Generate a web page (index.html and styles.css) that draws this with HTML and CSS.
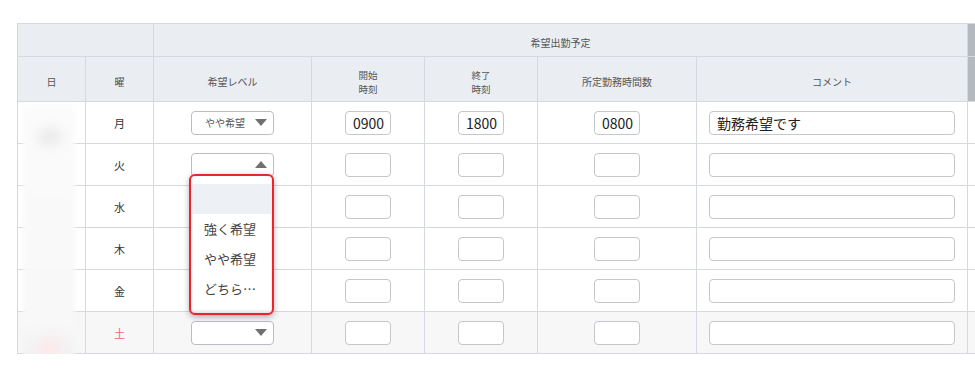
FILE: index.html
```html
<!DOCTYPE html>
<html lang="ja">
<head>
    <meta charset="UTF-8">
    <meta name="viewport" content="width=device-width, initial-scale=1.0">
    <title>希望出勤予定</title>
    <link rel="stylesheet" href="styles.css">
</head>
<body>
    <div class="sheet">
        <table class="plan">
            <colgroup>
                <col class="c-day">
                <col class="c-week">
                <col class="c-level">
                <col class="c-time">
                <col class="c-time">
                <col class="c-hours">
                <col class="c-comment">
                <col class="c-scroll">
            </colgroup>
            <thead>
                <tr class="head-top">
                    <th colspan="2"></th>
                    <th colspan="5">希望出勤予定</th>
                    <th class="scroll"></th>
                </tr>
                <tr class="head-sub">
                    <th>日</th>
                    <th>曜</th>
                    <th>希望レベル</th>
                    <th><span class="two">開始</span><span class="two">時刻</span></th>
                    <th><span class="two">終了</span><span class="two">時刻</span></th>
                    <th>所定勤務時間数</th>
                    <th>コメント</th>
                    <th class="scroll"></th>
                </tr>
            </thead>
            <tbody>
                <tr>
                    <td class="day"></td>
                    <td class="week">月</td>
                    <td><div class="pick">やや希望<span class="arrow down"></span></div></td>
                    <td><input class="num" type="text" value="0900"></td>
                    <td><input class="num" type="text" value="1800"></td>
                    <td><input class="num" type="text" value="0800"></td>
                    <td><input class="memo" type="text" value="勤務希望です"></td>
                    <td></td>
                </tr>
                <tr>
                    <td class="day"></td>
                    <td class="week">火</td>
                    <td>
                        <div class="pick-wrap">
                            <div class="pick"><span class="arrow up"></span></div>
                            <!-- open list for this row -->
                            <ul class="menu">
                                <li class="active"></li>
                                <li>強く希望</li>
                                <li>やや希望</li>
                                <li>どちら…</li>
                            </ul>
                        </div>
                    </td>
                    <td><input class="num" type="text"></td>
                    <td><input class="num" type="text"></td>
                    <td><input class="num" type="text"></td>
                    <td><input class="memo" type="text"></td>
                    <td></td>
                </tr>
                <tr>
                    <td class="day"></td>
                    <td class="week">水</td>
                    <td><div class="pick"><span class="arrow down"></span></div></td>
                    <td><input class="num" type="text"></td>
                    <td><input class="num" type="text"></td>
                    <td><input class="num" type="text"></td>
                    <td><input class="memo" type="text"></td>
                    <td></td>
                </tr>
                <tr>
                    <td class="day"></td>
                    <td class="week">木</td>
                    <td><div class="pick"><span class="arrow down"></span></div></td>
                    <td><input class="num" type="text"></td>
                    <td><input class="num" type="text"></td>
                    <td><input class="num" type="text"></td>
                    <td><input class="memo" type="text"></td>
                    <td></td>
                </tr>
                <tr>
                    <td class="day"></td>
                    <td class="week">金</td>
                    <td><div class="pick"><span class="arrow down"></span></div></td>
                    <td><input class="num" type="text"></td>
                    <td><input class="num" type="text"></td>
                    <td><input class="num" type="text"></td>
                    <td><input class="memo" type="text"></td>
                    <td></td>
                </tr>
                <tr class="sat">
                    <td class="day"></td>
                    <td class="week">土</td>
                    <td><div class="pick"><span class="arrow down"></span></div></td>
                    <td><input class="num" type="text"></td>
                    <td><input class="num" type="text"></td>
                    <td><input class="num" type="text"></td>
                    <td><input class="memo" type="text"></td>
                    <td></td>
                </tr>
            </tbody>
        </table>
        <div class="mask"></div>
    </div>
</body>
</html>
```

FILE: styles.css
```css
body {
    margin: 0;
    background-color: #fff;
    font-family: "Noto Sans CJK JP", "Noto Sans", sans-serif;
    color: #444;
    overflow: hidden;
}

.sheet {
    position: relative;
    margin: 23px 0 0 17px;
    width: 958px;
}

.plan {
    width: 958px;
    border-collapse: collapse;
    table-layout: fixed;
}

.c-day, .c-week { width: 68px; }
.c-level { width: 158px; }
.c-time { width: 113px; }
.c-hours { width: 159px; }
.c-comment { width: 271px; }
.c-scroll { width: 8px; }

th, td {
    border: 1px solid #d5d9df;
    padding: 0;
    text-align: center;
}

th {
    background-color: #eaedf2;
    font-weight: normal;
    font-size: 10px;
    line-height: 12px;
    color: #555;
    padding-top: 5px;
}

th .two {
    display: block;
    font-size: 9.5px;
    line-height: 14px;
}

.head-top { height: 33px; }
.head-sub { height: 45px; }

th.scroll {
    background-color: #b4b9bf;
    border-right: none;
}

td:last-child {
    border-right: none;
}

tbody tr { height: 42px; }

.sat td { background-color: #f7f7f7; }

.week {
    font-size: 11px;
    color: #333;
}

.sat .week { color: #e5677f; }

/* level select, drawn by hand */
.pick-wrap {
    position: relative;
    width: 83px;
    margin: 0 auto;
}

.pick {
    display: flex;
    align-items: center;
    box-sizing: border-box;
    width: 83px;
    height: 24px;
    margin: 0 auto;
    padding: 0 6px 0 13px;
    border: 1px solid #babec4;
    border-radius: 4px;
    background-color: #fff;
    font-size: 10px;
    color: #555;
    text-align: left;
}

.arrow {
    margin-left: auto;
    width: 0;
    height: 0;
    border-left: 6px solid transparent;
    border-right: 6px solid transparent;
}

.arrow.down { border-top: 7px solid #707070; }
.arrow.up { border-bottom: 7px solid #707070; }

.menu {
    position: absolute;
    top: 21px;
    left: -2px;
    width: 85px;
    box-sizing: border-box;
    margin: 0;
    padding: 8px 0 9px;
    list-style: none;
    background-color: #fff;
    border: 2px solid #e8262b;
    border-radius: 6px;
    box-shadow: 0 2px 6px rgba(0, 0, 0, 0.3), inset 0 -2px 3px rgba(0, 0, 0, 0.12);
    z-index: 2;
}

.menu li {
    height: 30px;
    line-height: 30px;
    padding-left: 13px;
    font-size: 13px;
    color: #444;
    text-align: left;
}

.menu li.active { background-color: #edf0f4; }

input {
    display: block;
    box-sizing: border-box;
    height: 24px;
    margin: 0 auto;
    border: 1px solid #c3c6cb;
    border-radius: 4px;
    background-color: #fff;
    font-family: "Noto Sans CJK JP", "Noto Sans", sans-serif;
    font-size: 14px;
    color: #222;
    outline: none;
}

.num {
    width: 46px;
    padding: 0 0 0 7px;
}

.memo {
    width: 246px;
    margin: 0 0 0 12px;
    padding: 0 0 0 7px;
}

/* blurred date column */
.mask {
    position: absolute;
    left: 6px;
    top: 82px;
    width: 52px;
    height: 270px;
    background: linear-gradient(#fbfbfb, #f8f8f8 80%, #eeeff1);
    filter: blur(2px);
}

.mask::before {
    content: "";
    position: absolute;
    left: 14px;
    top: 22px;
    width: 26px;
    height: 20px;
    border-radius: 50%;
    background-color: #ececec;
    filter: blur(5px);
}

.mask::after {
    content: "";
    position: absolute;
    left: 14px;
    top: 232px;
    width: 26px;
    height: 22px;
    border-radius: 50%;
    background-color: #fbeaea;
    filter: blur(5px);
}
```
